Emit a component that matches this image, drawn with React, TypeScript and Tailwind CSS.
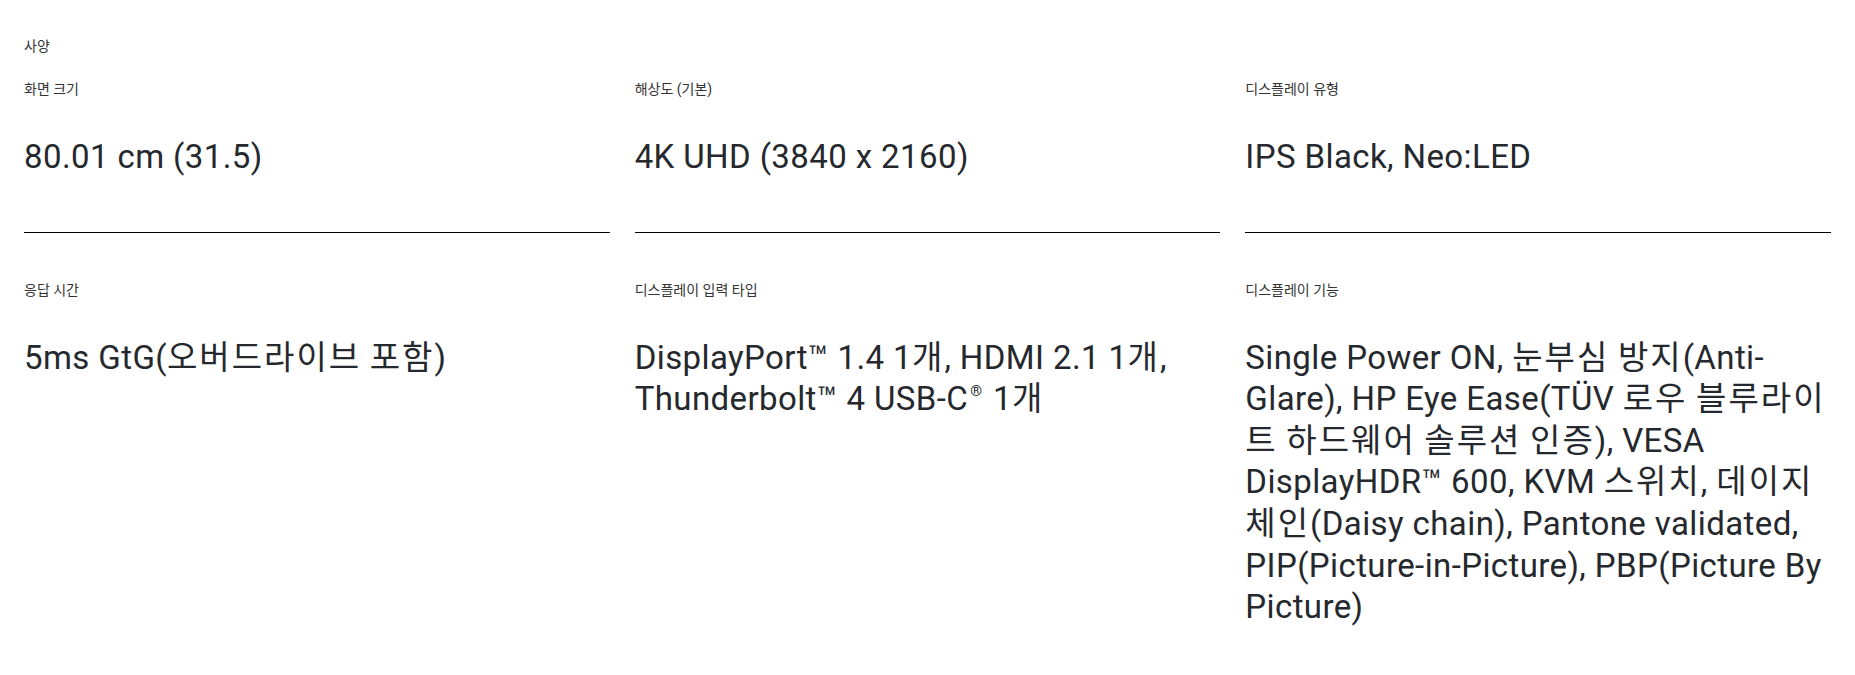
import React from "react";

type Spec = {
  label: string;
  lines: React.ReactNode[];
};

// Hangul runs get a little extra tracking so they sit as wide as the original
const ko = (text: string) =>
  text.split(/([\uAC00-\uD7A3]+)/).map((part, i) =>
    /[\uAC00-\uD7A3]/.test(part) ? (
      <span key={i} className="tracking-[2px]">
        {part}
      </span>
    ) : (
      part
    )
  );

const specs: Spec[] = [
  { label: "화면 크기", lines: ["80.01 cm (31.5)"] },
  { label: "해상도 (기본)", lines: ["4K UHD (3840 x 2160)"] },
  { label: "디스플레이 유형", lines: ["IPS Black, Neo:LED"] },
  { label: "응답 시간", lines: [ko("5ms GtG(오버드라이브 포함)")] },
  {
    label: "디스플레이 입력 타입",
    lines: [
      ko("DisplayPort™ 1.4 1개, HDMI 2.1 1개,"),
      <>
        Thunderbolt™ 4 USB-C<sup className="text-[15px] top-[-0.95em] ml-[2px] mr-[2px]">®</sup> {ko("1개")}
      </>,
    ],
  },
  {
    label: "디스플레이 기능",
    lines: [
      ko("Single Power ON, 눈부심 방지(Anti-"),
      ko("Glare), HP Eye Ease(TÜV 로우 블루라이"),
      ko("트 하드웨어 솔루션 인증), VESA"),
      ko("DisplayHDR™ 600, KVM 스위치, 데이지"),
      ko("체인(Daisy chain), Pantone validated,"),
      "PIP(Picture-in-Picture), PBP(Picture By",
      "Picture)",
    ],
  },
];

const SpecCell = ({ spec }: { spec: Spec }) => (
  <div className="border-b border-black pb-[54px]">
    <div className="text-[14px] leading-[18px] text-[#333333]">{spec.label}</div>
    <div className="mt-[38px] text-[33px] leading-[41.6px] tracking-[0.4px] text-[#25282d]">
      {spec.lines.map((line, i) => (
        <div key={i} className="whitespace-nowrap">
          {line}
        </div>
      ))}
    </div>
  </div>
);

const App = () => {
  return (
    <div className="min-h-[675px] bg-white px-6 pt-[37px] font-['Roboto','Noto_Sans_CJK_KR',sans-serif]">
      <div className="text-[14px] leading-[18px] text-[#333333]">사양</div>
      <div className="mt-[25px] grid grid-cols-3 gap-x-[25px] gap-y-[48px]">
        {specs.map((spec, i) => (
          <SpecCell key={i} spec={spec} />
        ))}
      </div>
    </div>
  );
};

export default App;
